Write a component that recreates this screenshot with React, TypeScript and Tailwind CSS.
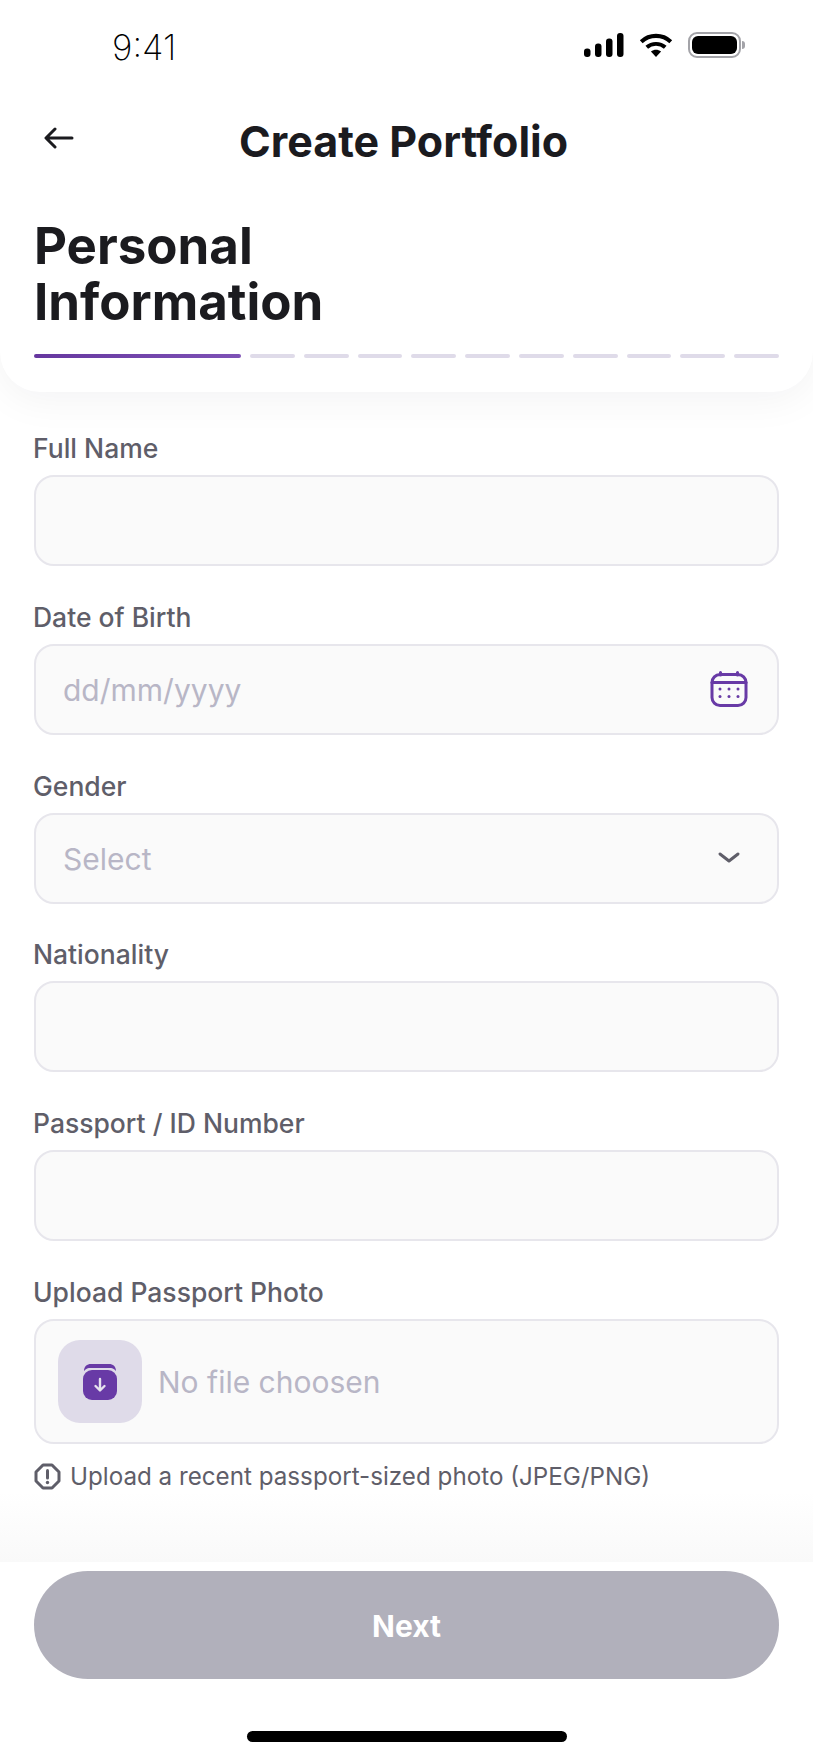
import React from "react";

const bodyFont = "font-['Inter','Noto_Sans',sans-serif]";

const Field: React.FC<{ label: string; placeholder?: string; icon?: React.ReactNode }> = ({ label, placeholder, icon }) => (
  <div className="flex flex-col gap-[9px]">
    <label className="-ml-[1px] h-[33px] text-[26.5px] leading-[31px] font-medium text-[#5f5e69]">{label}</label>
    <div className="flex h-[91px] items-center justify-between rounded-[20px] border-2 border-[#e7e6ec] bg-[#fafafa] pl-[27px] pr-[29px]">
      <span className="pt-[2px] text-[30px] text-[#b8b6c6]">{placeholder}</span>
      {icon}
    </div>
  </div>
);

const CalendarIcon = () => (
  <svg width="38" height="36" viewBox="0 0 38 36" fill="none" stroke="#683aa6" strokeWidth="3" strokeLinecap="round">
    <rect x="2" y="3.5" width="34" height="31" rx="8" />
    <path d="M2 11.5H36" />
    <path d="M10.5 1.5V4M27.5 1.5V4" />
    <g stroke="none" fill="#683aa6">
      <circle cx="10" cy="18" r="1.5" />
      <circle cx="19" cy="18" r="1.5" />
      <circle cx="28" cy="18" r="1.5" />
      <circle cx="10" cy="25.5" r="1.5" />
      <circle cx="19" cy="25.5" r="1.5" />
      <circle cx="28" cy="25.5" r="1.5" />
    </g>
  </svg>
);

const Chevron = () => (
  <svg className="mr-[7px]" width="24" height="14" viewBox="0 0 24 14" fill="none" stroke="#5f5e69" strokeWidth="3" strokeLinecap="round" strokeLinejoin="round">
    <path d="M3 3 12 10 21 3" />
  </svg>
);

const UploadIcon = () => (
  <svg width="36" height="37" viewBox="0 0 36 37" fill="none">
    <path d="M2 8C2 3.5 5 1 9 1H27C31 1 34 3.5 34 8C32 5.5 30 5 27 5H9C6 5 4 5.5 2 8Z" fill="#683aa6" />
    <rect x="1" y="7" width="34" height="30" rx="9" fill="#683aa6" />
    <path d="M18 16V27M13.5 23 18 27.5 22.5 23" stroke="#e6e2ee" strokeWidth="2.4" strokeLinecap="round" strokeLinejoin="round" />
  </svg>
);

const InfoIcon = () => (
  <svg width="27" height="27" viewBox="0 0 27 27" fill="none">
    <path d="M9 2H18L25 9V18L18 25H9L2 18V9Z" fill="none" stroke="#5f5e69" strokeWidth="3" strokeLinejoin="round" />
    <path d="M13.5 7.5V15" stroke="#5f5e69" strokeWidth="3" strokeLinecap="round" />
    <circle cx="13.5" cy="19.5" r="1.7" fill="#5f5e69" />
  </svg>
);

const App: React.FC = () => {
  return (
    <div className={`flex h-[1759px] w-[813px] flex-col bg-white ${bodyFont}`}>
      <div className="relative z-10 flex h-[392px] flex-col rounded-b-[40px] bg-white px-[34px] shadow-[0_8px_40px_rgba(20,20,40,0.05)]">
        {/* status bar */}
        <div className="flex h-[113px] items-start justify-between pl-[78px] pr-[34px] pt-[26px]">
          <span className="text-[35px] leading-[42px] font-extralight text-black">9:41</span>
          <div className="flex items-center gap-[14px] pt-[6px]">
            <svg width="40" height="24" viewBox="0 0 40 24" fill="#000">
              <rect x="0" y="15.5" width="6.5" height="8.5" rx="3" />
              <rect x="11" y="10.5" width="6.5" height="13.5" rx="3" />
              <rect x="22" y="5.5" width="6.5" height="18.5" rx="3" />
              <rect x="33" y="0" width="6.5" height="24" rx="3" />
            </svg>
            <svg width="36" height="24" viewBox="0 0 36 26" fill="none">
              <path d="M2 9.5C11 1 25 1 34 9.5" stroke="#000" strokeWidth="4.4" />
              <path d="M8 15.5C13.5 10.5 22.5 10.5 28 15.5" stroke="#000" strokeWidth="4.2" />
              <path d="M12.5 20 18 26 23.5 20C20 17.5 16 17.5 12.5 20Z" fill="#000" />
            </svg>
            <div className="flex items-center">
              <div className="flex h-[26px] w-[53px] items-center justify-center rounded-[9px] border-2 border-[#a3a3a8] bg-white">
                <div className="h-[18px] w-[45px] rounded-[6px] bg-black" />
              </div>
              <div className="ml-[1px] h-[8px] w-[3px] rounded-r-full bg-[#a3a3a8]" />
            </div>
          </div>
        </div>

        {/* nav */}
        <div className="relative flex h-[60px] items-center justify-center">
          <svg className="absolute left-[10px] top-[14px]" width="30" height="22" viewBox="0 0 30 22" fill="none" stroke="#1b1b1f" strokeWidth="3" strokeLinecap="round" strokeLinejoin="round">
            <path d="M28 11H2.5M11 2 2 11l9 9" />
          </svg>
          <h2 className="pb-[4px] pr-[6px] text-[43px] leading-[60px] font-bold text-[#1b1b1f]">Create Portfolio</h2>
        </div>

        <h1 className="mt-[45px] w-[340px] text-[51px] leading-[56px] font-bold text-[#1b1b1f]">
          Personal Information
        </h1>

        {/* progress */}
        <div className="mt-[24px] flex h-[4px] gap-[9px]">
          <div className="h-full w-[207px] rounded-full bg-gradient-to-r from-[#66379f] to-[#7e52b6]" />
          {Array.from({ length: 10 }).map((_, i) => (
            <div key={i} className="h-full flex-1 rounded-full bg-[#dfdbe9]" />
          ))}
        </div>
      </div>

      {/* form */}
      <div className="flex flex-1 flex-col bg-gradient-to-b from-white from-[94%] to-[#f9f9f9] px-[34px] pt-[41px]">
        <div className="flex flex-col gap-[35.8px]">
          <Field label="Full Name" />
          <Field label="Date of Birth" placeholder="dd/mm/yyyy" icon={<CalendarIcon />} />
          <Field label="Gender" placeholder="Select" icon={<Chevron />} />
          <Field label="Nationality" />
          <Field label="Passport / ID Number" />
          <div className="flex flex-col gap-[9px]">
            <label className="-ml-[1px] h-[33px] text-[26.5px] leading-[31px] font-medium text-[#5f5e69]">Upload Passport Photo</label>
            <div className="flex h-[125px] items-center gap-[16px] rounded-[20px] border-2 border-[#e7e6ec] bg-[#fafafa] pl-[22px]">
              <div className="flex h-[83px] w-[84px] items-center justify-center rounded-[22px] bg-[#dfdbe9]">
                <UploadIcon />
              </div>
              <span className="pt-[2px] text-[30px] text-[#b8b6c6]">No file choosen</span>
            </div>
            <div className="mt-[8px] flex items-center gap-[9px]">
              <InfoIcon />
              <span className="text-[24.2px] leading-[32px] text-[#5f5e69]">Upload a recent passport-sized photo (JPEG/PNG)</span>
            </div>
          </div>
        </div>
      </div>

      {/* footer */}
      <div className="flex h-[197px] flex-col items-center bg-white px-[34px] pt-[9px]">
        <button className="h-[108px] w-full rounded-full bg-[#b1b0bb] pt-[3px] text-[30px] font-bold text-white">Next</button>
        <div className="mt-[52px] h-[11px] w-[320px] rounded-full bg-black" />
      </div>
    </div>
  );
};

export default App;
